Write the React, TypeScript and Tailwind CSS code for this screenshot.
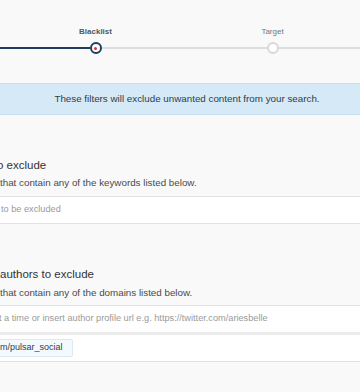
const steps = [
  { label: "Keywords", left: "navy", right: "navy", state: "done" },
  { label: "Blacklist", left: "navy", right: "gray", state: "active" },
  { label: "Target", left: "gray", right: "gray", state: "todo" },
  { label: "Review", left: "gray", right: "gray", state: "todo" },
];

function Step({ label, left, right, state }: (typeof steps)[number]) {
  return (
    <div className="flex w-[177px] shrink-0 flex-col items-center">
      <span
        className={
          state === "active"
            ? "h-[10px] text-[8px] leading-[10px] font-semibold text-[#4f5a66]"
            : "h-[10px] text-[8px] leading-[10px] text-[#777]"
        }
      >
        {label}
      </span>
      <div className="mt-[5px] flex h-[12px] w-full items-center">
        <div className={left === "navy" ? "h-[2px] flex-1 bg-[#1f3d5e]" : "h-[2px] flex-1 bg-[#dedede]"} />
        {state === "active" ? (
          <div className="flex h-[12px] w-[12px] items-center justify-center rounded-full border-2 border-[#1f3d5e] bg-white">
            <div className="h-[3px] w-[3px] rounded-full bg-[#d9372b]" />
          </div>
        ) : state === "done" ? (
          <div className="h-[12px] w-[12px] rounded-full border-2 border-[#1f3d5e] bg-[#1f3d5e]" />
        ) : (
          <div className="h-[12px] w-[12px] rounded-full border-2 border-[#d8d8d8] bg-white" />
        )}
        <div className={right === "navy" ? "h-[2px] flex-1 bg-[#1f3d5e]" : "h-[2px] flex-1 bg-[#dedede]"} />
      </div>
    </div>
  );
}

export default function App() {
  return (
    <div className="h-[392px] w-[360px] overflow-hidden bg-[#f9f9f9] font-['Liberation_Sans',Arial,sans-serif]">
      <div className="-ml-[170px] flex pt-[27px]">
        {steps.map((s) => (
          <Step key={s.label} {...s} />
        ))}
      </div>

      <div className="-ml-[133px] w-[640px]">
        <div className="mt-[29px] flex h-[32px] items-center justify-center border-y border-[#c6def0] bg-[#d5e9f7] text-[9.8px] text-[#2e3d4c]">
          These filters will exclude unwanted content from your search.
        </div>

        <div className="pt-[42px]">
          <h3 className="-ml-[3px] pl-[133px] text-[11.5px] leading-[16px] text-[#333]">o exclude</h3>
          <p className="mt-[3px] pl-[133px] text-[9.8px] leading-[14px] text-[#4a4a4a]">
            that contain any of the keywords listed below.
          </p>
          <div className="mt-[6px] flex h-[28px] items-center border-y border-[#e2e2e2] bg-white pl-[134px] text-[9.2px] text-[#9a9a9a]">
            to be excluded
          </div>
        </div>

        <div className="pt-[42px]">
          <h3 className="pl-[133px] text-[11.5px] leading-[16px] text-[#333]">authors to exclude</h3>
          <p className="mt-[4px] pl-[133px] text-[9.8px] leading-[14px] text-[#4a4a4a]">
            that contain any of the domains listed below.
          </p>
          <div className="mt-[5px] border-b border-[#e2e2e2] bg-white">
            <div className="flex h-[27px] items-center border-t border-[#e2e2e2] pl-[132px] text-[9.2px] text-[#9a9a9a]">
              t a time or insert author profile url e.g. https://twitter.com/ariesbelle
            </div>
            <div className="h-[3px] bg-[#ececec]" />
            <div className="flex h-[26px] items-center pl-[122px]">
              <span className="flex h-[18px] items-center rounded-[2px] border border-[#dce8f2] bg-[#f4f9fd] pl-[10px] pr-[9px] text-[9px] text-[#2e3d4c]">
                m/pulsar_social
              </span>
            </div>
          </div>
        </div>
      </div>
    </div>
  );
}
